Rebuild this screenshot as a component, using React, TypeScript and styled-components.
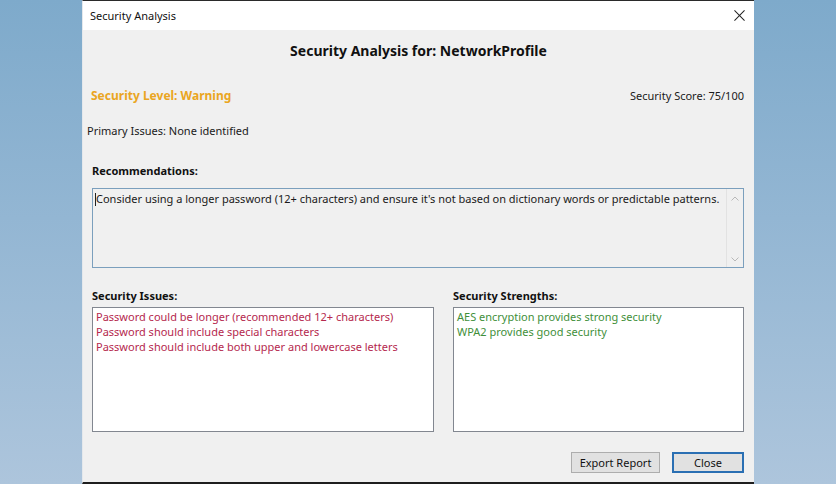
import React from 'react';
import styled, { createGlobalStyle } from 'styled-components';

const GlobalStyle = createGlobalStyle`
	html, body {
		margin: 0;
		padding: 0;
		width: 836px;
		height: 484px;
		overflow: hidden;
	}
	body {
		font-family: 'Segoe UI', 'Noto Sans', 'Open Sans', sans-serif;
		font-size: 11px;
		color: #1a1a1a;
	}
`;

const issues = [
	'Password could be longer (recommended 12+ characters)',
	'Password should include special characters',
	'Password should include both upper and lowercase letters',
];

const strengths = ['AES encryption provides strong security', 'WPA2 provides good security'];

export default function App() {
	return (
		<>
			<GlobalStyle />
			<Desktop>
				<Window>
					<TitleBar>
						<TitleText>Security Analysis</TitleText>
						<CloseGlyph viewBox='0 0 12 12'>
							<path d='M0.5 0.5 L11.5 11.5 M11.5 0.5 L0.5 11.5' />
						</CloseGlyph>
					</TitleBar>
					<Body>
						<Heading>Security Analysis for: NetworkProfile</Heading>
						<LevelRow>
							<LevelText>Security Level: Warning</LevelText>
							<span>Security Score: 75/100</span>
						</LevelRow>
						<PrimaryRow>Primary Issues: None identified</PrimaryRow>
						<SectionLabel $top={20}>Recommendations:</SectionLabel>
						<RecBox>
							<RecText>
								<Caret />
								Consider using a longer password (12+ characters) and ensure it's not based on
								dictionary words or predictable patterns.
							</RecText>
							<ScrollTrack>
								<Chevron viewBox='0 0 8 5'>
									<path d='M0.5 4.5 L4 1 L7.5 4.5' />
								</Chevron>
								<Chevron viewBox='0 0 8 5'>
									<path d='M0.5 0.5 L4 4 L7.5 0.5' />
								</Chevron>
							</ScrollTrack>
						</RecBox>
						<Columns>
							<Column $width={342}>
								<SectionLabel $top={0}>Security Issues:</SectionLabel>
								<ListBox>
									{issues.map(t => (
										<ListItem key={t} $color='#b5284e'>
											{t}
										</ListItem>
									))}
								</ListBox>
							</Column>
							<Column $width={291}>
								<SectionLabel $top={0}>Security Strengths:</SectionLabel>
								<ListBox>
									{strengths.map(t => (
										<ListItem key={t} $color='#3f8f3a'>
											{t}
										</ListItem>
									))}
								</ListBox>
							</Column>
						</Columns>
						<ButtonRow>
							<Button $width={89}>Export Report</Button>
							<Button $width={72} $primary>
								Close
							</Button>
						</ButtonRow>
					</Body>
				</Window>
			</Desktop>
		</>
	);
}

const Desktop = styled.div`
	width: 836px;
	height: 484px;
	display: flex;
	justify-content: center;
	background: linear-gradient(180deg, #7eaacb 0%, #93b6d3 45%, #adc5dc 100%);
`;

const Window = styled.div`
	width: 671px;
	height: 481px;
	display: flex;
	flex-direction: column;
	background: #f0f0f0;
	border-top: 1px solid #2a2a2a;
	border-bottom: 2px solid #1e1e1e;
	border-left: 1px solid #e4e8ec;
`;

const TitleBar = styled.div`
	height: 29px;
	flex: none;
	display: flex;
	align-items: center;
	justify-content: space-between;
	background: #ffffff;
	padding: 0 9px 0 7px;
`;

const TitleText = styled.span`
	font-size: 11px;
	color: #111;
`;

const CloseGlyph = styled.svg`
	width: 11px;
	height: 11px;
	stroke: #222;
	stroke-width: 1.1;
	fill: none;
`;

const Body = styled.div`
	display: flex;
	flex-direction: column;
	padding: 0 10px 0 4px;
`;

const Heading = styled.div`
	height: 40px;
	display: flex;
	align-items: center;
	justify-content: center;
	font-size: 14px;
	font-weight: 700;
	color: #111;
	padding-left: 6px;
`;

const LevelRow = styled.div`
	margin-top: 10px;
	height: 30px;
	display: flex;
	align-items: center;
	justify-content: space-between;
	padding-left: 4px;
`;

const LevelText = styled.span`
	color: #eaa521;
	font-weight: 700;
	font-size: 12px;
`;

const PrimaryRow = styled.div`
	margin-top: 10px;
	height: 20px;
	display: flex;
	align-items: center;
`;

const SectionLabel = styled.div<{ $top: number }>`
	margin-top: ${p => p.$top}px;
	height: 20px;
	display: flex;
	align-items: center;
	padding-left: 5px;
	font-weight: 700;
	color: #111;
`;

const RecBox = styled.div`
	margin: 8px 0 0 5px;
	height: 80px;
	box-sizing: border-box;
	border: 1px solid #7b9fbd;
	display: flex;
	background: #f0f0f0;
`;

const RecText = styled.div`
	flex: 1;
	min-width: 0;
	overflow: hidden;
	padding: 2px 0 0 2px;
	line-height: 15px;
	white-space: nowrap;
	color: #1a1a1a;
`;

const Caret = styled.span`
	display: inline-block;
	width: 1px;
	height: 13px;
	background: #222;
	vertical-align: -3px;
`;

const ScrollTrack = styled.div`
	width: 16px;
	flex: none;
	border-left: 1px solid #e2e2e2;
	display: flex;
	flex-direction: column;
	justify-content: space-between;
	align-items: center;
	padding: 7px 0 5px;
`;

const Chevron = styled.svg`
	width: 8px;
	height: 5px;
	stroke: #b8b8b8;
	stroke-width: 1;
	fill: none;
`;

const Columns = styled.div`
	margin: 17px 0 0 5px;
	display: flex;
	gap: 19px;
`;

const Column = styled.div<{ $width: number }>`
	width: ${p => p.$width}px;
	display: flex;
	flex-direction: column;
	& > div:first-child {
		padding-left: 0;
	}
`;

const ListBox = styled.div`
	margin-top: 2px;
	height: 125px;
	box-sizing: border-box;
	border: 1px solid #828790;
	background: #ffffff;
	padding: 1px 0 0 3px;
`;

const ListItem = styled.div<{ $color: string }>`
	color: ${p => p.$color};
	line-height: 15px;
	white-space: nowrap;
`;

const ButtonRow = styled.div`
	margin-top: 20px;
	display: flex;
	justify-content: flex-end;
	gap: 12px;
`;

const Button = styled.div<{ $width: number; $primary?: boolean }>`
	width: ${p => p.$width}px;
	height: 21px;
	box-sizing: border-box;
	display: flex;
	align-items: center;
	justify-content: center;
	background: #e1e1e1;
	border: ${p => (p.$primary ? '2px solid #2a6fb3' : '1px solid #adadad')};
	color: #111;
`;
